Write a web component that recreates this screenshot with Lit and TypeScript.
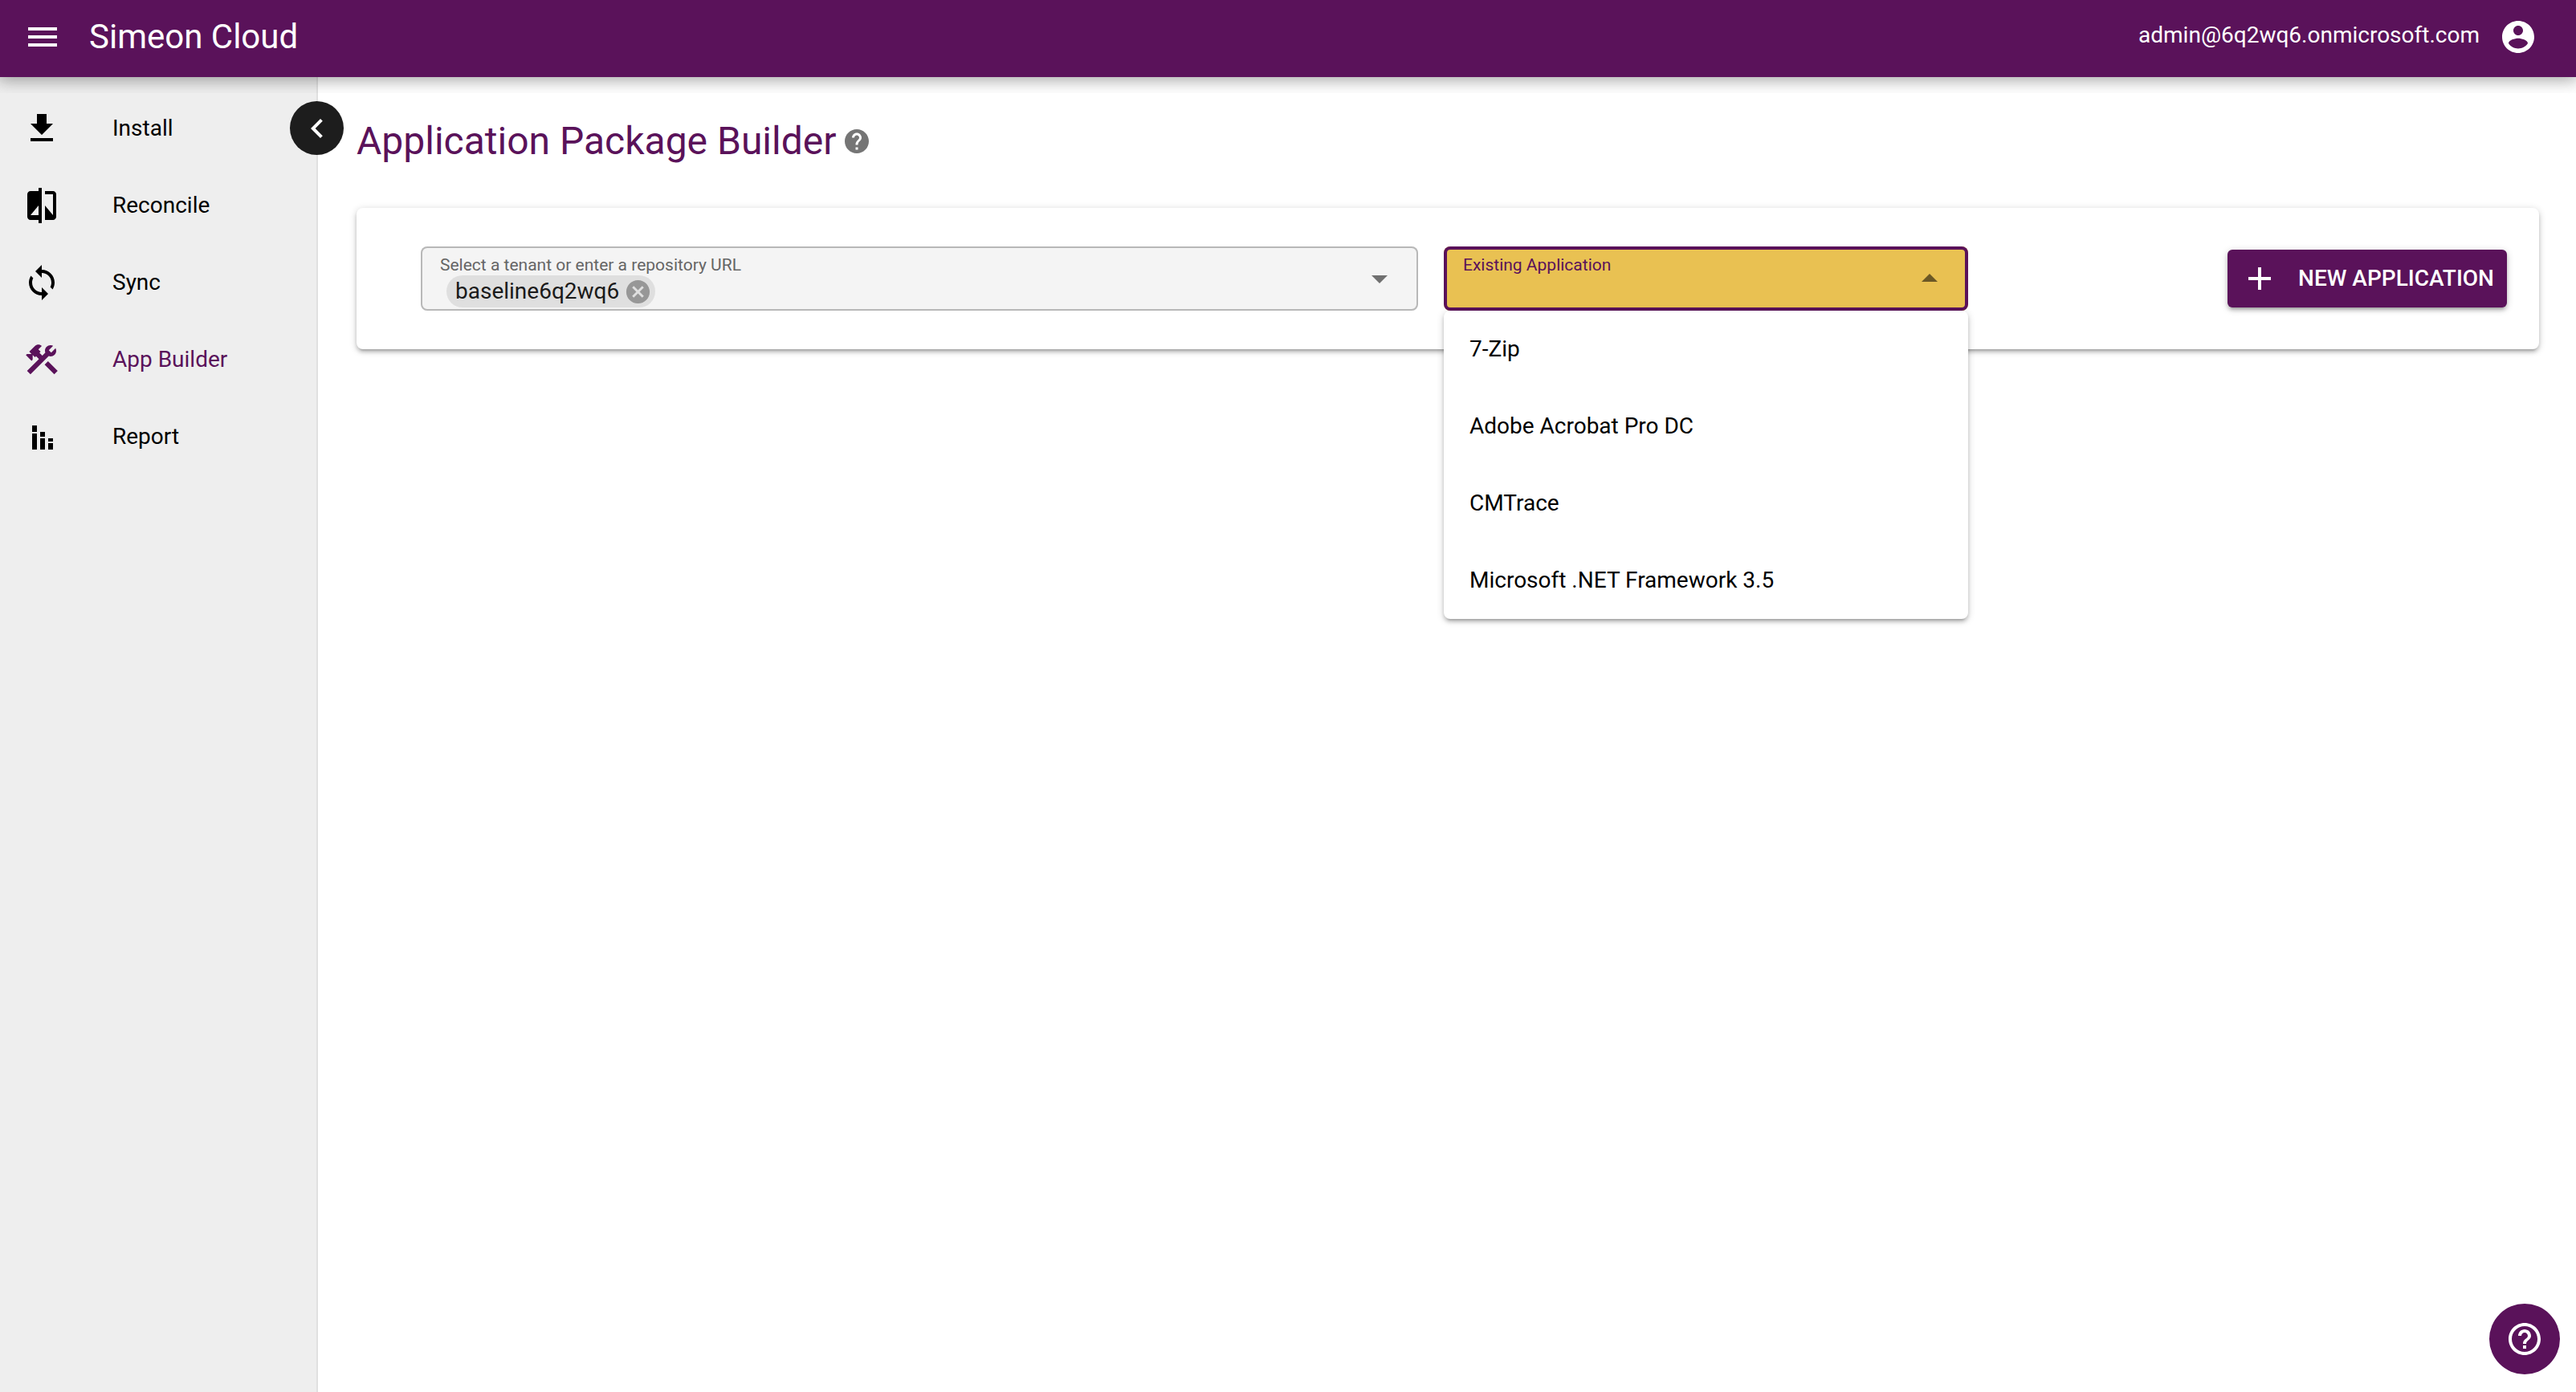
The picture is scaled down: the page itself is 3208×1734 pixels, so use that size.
import { LitElement, html, css, svg, nothing } from "lit";
import { customElement, property, state } from "lit/decorators.js";
import { classMap } from "lit/directives/class-map.js";

const icons: Record<string, unknown> = {
  menu: svg`<path d="M3 18h18v-2H3v2zm0-5h18v-2H3v2zm0-7v2h18V6H3z"/>`,
  account: svg`<path d="M12 2C6.48 2 2 6.48 2 12s4.48 10 10 10 10-4.48 10-10S17.52 2 12 2zm0 3c1.66 0 3 1.34 3 3s-1.34 3-3 3-3-1.34-3-3 1.34-3 3-3zm0 14.2c-2.5 0-4.71-1.28-6-3.22.03-1.99 4-3.08 6-3.08 1.99 0 5.97 1.09 6 3.08-1.29 1.94-3.5 3.22-6 3.22z"/>`,
  download: svg`<path d="M19 9h-4V3H9v6H5l7 7 7-7zM5 18v2h14v-2H5z"/>`,
  compare: svg`<path d="M10 3H5c-1.1 0-2 .9-2 2v14c0 1.1.9 2 2 2h5v2h2V1h-2v2zm0 15H5l5-6v6zm9-15h-5v2h5v13l-5-6v9h5c1.1 0 2-.9 2-2V5c0-1.1-.9-2-2-2z"/>`,
  sync: svg`<path d="M12 4V1L8 5l4 4V6c3.31 0 6 2.69 6 6 0 1.01-.25 1.97-.7 2.8l1.46 1.46C19.54 15.03 20 13.57 20 12c0-4.42-3.58-8-8-8zm0 14c-3.31 0-6-2.69-6-6 0-1.01.25-1.97.7-2.8L5.24 7.74C4.46 8.97 4 10.43 4 12c0 4.42 3.58 8 8 8v3l4-4-4-4v3z"/>`,
  construction: svg`<rect height="8.48" transform="matrix(0.7071 -0.7071 0.7071 0.7071 -6.8717 17.6255)" width="3" x="16.34" y="12.87"/><path d="M17.5 10c1.93 0 3.5-1.57 3.5-3.5 0-.58-.16-1.12-.41-1.6l-2.7 2.7-1.49-1.49 2.7-2.7c-.48-.25-1.02-.41-1.6-.41C15.57 3 14 4.57 14 6.5c0 .41.08.8.21 1.16l-1.85 1.85-1.78-1.78.71-.71-1.41-1.41L12 3.49c-1.17-1.17-3.07-1.17-4.24 0L4.22 7.03l1.41 1.41H2.81l-.71.71 3.54 3.54.71-.71V9.15l1.41 1.41.71-.71 1.78 1.78-7.41 7.41 2.12 2.12L16.34 9.79c.36.13.75.21 1.16.21z"/>`,
  chart: svg`<path d="M6 10h3v10H6zM6 5h3v4H6zM16 16h3v4h-3zM16 13h3v2h-3zM11 13h3v7h-3zM11 9h3v3h-3z"/>`,
  chevron: svg`<path d="M15.41 7.41L14 6l-6 6 6 6 1.41-1.41L10.83 12z"/>`,
  help: svg`<path d="M12 2C6.48 2 2 6.48 2 12s4.48 10 10 10 10-4.48 10-10S17.52 2 12 2zm1 17h-2v-2h2v2zm2.07-7.75l-.9.92C13.45 12.9 13 13.5 13 15h-2v-.5c0-1.1.45-2.1 1.17-2.83l1.24-1.26c.37-.36.59-.86.59-1.41 0-1.1-.9-2-2-2s-2 .9-2 2H8c0-2.21 1.79-4 4-4s4 1.79 4 4c0 .88-.36 1.68-.93 2.25z"/>`,
  helpOutline: svg`<path d="M11 18h2v-2h-2v2zm1-16C6.48 2 2 6.48 2 12s4.48 10 10 10 10-4.48 10-10S17.52 2 12 2zm0 18c-4.41 0-8-3.59-8-8s3.59-8 8-8 8 3.59 8 8-3.59 8-8 8zm0-14c-2.21 0-4 1.79-4 4h2c0-1.1.9-2 2-2s2 .9 2 2c0 2-3 1.75-3 5h2c0-2.25 3-2.5 3-5 0-2.21-1.79-4-4-4z"/>`,
  cancel: svg`<path d="M12 2C6.47 2 2 6.47 2 12s4.47 10 10 10 10-4.47 10-10S17.53 2 12 2zm5 13.59L15.59 17 12 13.41 8.41 17 7 15.59 10.59 12 7 8.41 8.41 7 12 10.59 15.59 7 17 8.41 13.41 12 17 15.59z"/>`,
  dropDown: svg`<path d="M7 10l5 5 5-5z"/>`,
  add: svg`<path d="M19 13h-6v6h-2v-6H5v-2h6V5h2v6h6v2z"/>`,
};

@customElement("md-icon")
class MdIcon extends LitElement {
  static styles = css`
    :host { display: block; flex: none; width: 48px; height: 48px; }
    .glyph { display: block; width: 100%; height: 100%; fill: currentColor; }
  `;
  @property() name = "menu";
  render() {
    return html`<svg class="glyph" viewBox="0 0 24 24" aria-hidden="true">${icons[this.name]}</svg>`;
  }
}

interface NavItem { label: string; icon: string; }

const navItems: NavItem[] = [
  { label: "Install", icon: "download" },
  { label: "Reconcile", icon: "compare" },
  { label: "Sync", icon: "sync" },
  { label: "App Builder", icon: "construction" },
  { label: "Report", icon: "chart" },
];

const applications = ["7-Zip", "Adobe Acrobat Pro DC", "CMTrace", "Microsoft .NET Framework 3.5"];

@customElement("app-root")
class AppRoot extends LitElement {
  static styles = css`
    :host {
      --primary: #5a125a;
      --accent: #e9c152;
      --raised: 0 2px 10px rgba(0, 0, 0, 0.2), 0 4px 4px rgba(0, 0, 0, 0.14), 0 6px 2px -4px rgba(0, 0, 0, 0.12);
      display: flex;
      flex-direction: column;
      min-height: 100vh;
      background: #fff;
      color: #000;
      font: 28px/40px Roboto, "Liberation Sans", sans-serif;
    }
    * { box-sizing: border-box; }
    button, input {
      margin: 0;
      padding: 0;
      border: 0;
      background: none;
      color: inherit;
      font: inherit;
    }
    button { cursor: pointer; }
    .header {
      position: sticky;
      top: 0;
      z-index: 2;
      display: flex;
      align-items: center;
      height: 96px;
      padding: 0 48px 4px 29px;
      background: var(--primary);
      color: #fff;
      box-shadow: 0 0 20px 4px rgba(0, 0, 0, 0.2), 0 0 20px rgba(0, 0, 0, 0.24);
      clip-path: inset(0 0 -20px 0);
    }
    .brand { flex: 1; padding-left: 34px; font-size: 42px; line-height: 64px; }
    .email { padding: 0 24px 4px 0; }
    .body { flex: 1; display: flex; }
    .sidebar {
      position: relative;
      flex: none;
      width: 396px;
      padding-top: 16px;
      border-right: 2px solid #e0e0e0;
      background: #eee;
    }
    .nav-item {
      display: flex;
      align-items: center;
      gap: 64px;
      height: 96px;
      padding: 0 28px;
      color: inherit;
      text-decoration: none;
    }
    .active { color: var(--primary); }
    .collapse {
      position: absolute;
      top: 30px;
      right: -34px;
      display: grid;
      place-items: center;
      width: 67px;
      height: 67px;
      border-radius: 50%;
      background: #1d1d1d;
      color: #fff;
    }
    .main { flex: 1; min-width: 0; padding: 48px 46px 48px 48px; }
    .heading { display: flex; align-items: center; gap: 8px; margin-bottom: 51px; }
    .title { margin: 0; color: var(--primary); font-size: 48px; font-weight: 400; line-height: 64px; }
    .hint { width: 36px; height: 36px; color: #757575; }
    .card {
      display: grid;
      grid-template-columns: 1242fr 653fr 639fr;
      align-items: center;
      gap: 32px;
      padding: 48px 40px 48px 80px;
      border-radius: 8px;
      background: #fff;
      box-shadow: var(--raised);
    }
    .field {
      position: relative;
      display: flex;
      align-items: center;
      height: 80px;
      padding: 0 24px;
      border-radius: 8px;
      background: #f4f4f4;
      box-shadow: inset 0 0 0 2px #b8b8b8;
    }
    .focused { background: var(--accent); box-shadow: inset 0 0 0 4px var(--primary); }
    .control { flex: 1; min-width: 0; align-self: flex-start; display: grid; gap: 2px; padding-top: 12px; }
    .label { color: #666; font-size: 21px; line-height: 22px; }
    .focused .label { color: var(--primary); }
    .values { display: flex; }
    .chip {
      display: flex;
      align-items: center;
      gap: 6px;
      height: 40px;
      margin-left: 8px;
      padding: 0 4px 0 11px;
      border-radius: 20px;
      background: #dfdfdf;
      color: #1a1a1a;
    }
    .remove { color: #979797; }
    .remove-icon { width: 35px; height: 35px; }
    .entry { flex: 1; min-width: 0; height: 40px; outline: none; }
    .arrow { color: rgba(0, 0, 0, 0.54); }
    .flipped { transform: rotate(180deg); }
    .menu {
      position: absolute;
      top: 100%;
      left: 0;
      right: 0;
      z-index: 1;
      margin: 0;
      padding: 0;
      border-radius: 8px;
      background: #fff;
      box-shadow: var(--raised);
      list-style: none;
    }
    .option { display: flex; align-items: center; height: 96px; padding: 0 32px; cursor: pointer; }
    .new-app {
      justify-self: end;
      display: flex;
      align-items: center;
      gap: 24px;
      height: 72px;
      padding: 0 16px;
      border-radius: 6px;
      background: var(--primary);
      color: #fff;
      font-weight: 500;
      text-transform: uppercase;
      white-space: nowrap;
      box-shadow: var(--raised);
    }
    .support {
      position: fixed;
      right: 20px;
      bottom: 22px;
      display: grid;
      place-items: center;
      width: 88px;
      height: 88px;
      border-radius: 50%;
      background: var(--primary);
      color: #fff;
    }
  `;

  @state() private open = true;
  @state() private tenant = "baseline6q2wq6";
  @state() private selected = "";
  @state() private page = "App Builder";

  private navigate(event: Event, label: string) {
    event.preventDefault();
    this.page = label;
  }

  private choose(name: string) {
    this.selected = name;
    this.open = false;
  }

  render() {
    return html`
      <header class="header">
        <button type="button" aria-label="Menu"><md-icon name="menu"></md-icon></button>
        <div class="brand">Simeon Cloud</div>
        <div class="email">admin@6q2wq6.onmicrosoft.com</div>
        <button type="button" aria-label="Account"><md-icon name="account"></md-icon></button>
      </header>
      <div class="body">
        <nav class="sidebar">
          ${navItems.map(
            (item) => html`<a
              class=${classMap({ "nav-item": true, active: item.label === this.page })}
              href="#"
              @click=${(e: Event) => this.navigate(e, item.label)}
              ><md-icon name=${item.icon}></md-icon><span>${item.label}</span></a>`
          )}
          <button class="collapse" type="button" aria-label="Collapse"><md-icon name="chevron"></md-icon></button>
        </nav>
        <main class="main">
          <div class="heading">
            <h1 class="title">Application Package Builder</h1>
            <md-icon class="hint" name="help"></md-icon>
          </div>
          <section class="card">
            <div class="field">
              <div class="control">
                <label class="label" for="tenant">Select a tenant or enter a repository URL</label>
                <div class="values">
                  ${this.tenant
                    ? html`<span class="chip">${this.tenant}<button
                          class="remove" type="button" aria-label="Remove"
                          @click=${() => (this.tenant = "")}
                        ><md-icon class="remove-icon" name="cancel"></md-icon></button></span>`
                    : nothing}
                  <input class="entry" id="tenant" type="text" autocomplete="off" />
                </div>
              </div>
              <button class="arrow" type="button" aria-label="Show tenants"><md-icon name="dropDown"></md-icon></button>
            </div>
            <div class=${classMap({ field: true, focused: this.open })}>
              <div class="control">
                <label class="label" for="application">Existing Application</label>
                <div class="values">
                  <input
                    class="entry" id="application" type="text" role="combobox" autocomplete="off"
                    aria-controls="applications" aria-expanded=${this.open} .value=${this.selected}
                    @click=${() => (this.open = true)}
                  />
                </div>
              </div>
              <button class="arrow" type="button" aria-label="Show applications" @click=${() => (this.open = !this.open)}>
                <md-icon class=${classMap({ flipped: this.open })} name="dropDown"></md-icon>
              </button>
              ${this.open
                ? html`<ul class="menu" id="applications" role="listbox">
                    ${applications.map(
                      (name) => html`<li class="option" role="option" aria-selected=${name === this.selected}
                        @click=${() => this.choose(name)}>${name}</li>`
                    )}
                  </ul>`
                : nothing}
            </div>
            <button class="new-app" type="button"><md-icon name="add"></md-icon>New Application</button>
          </section>
        </main>
      </div>
      <button class="support" type="button" aria-label="Help"><md-icon name="helpOutline"></md-icon></button>
    `;
  }
}
